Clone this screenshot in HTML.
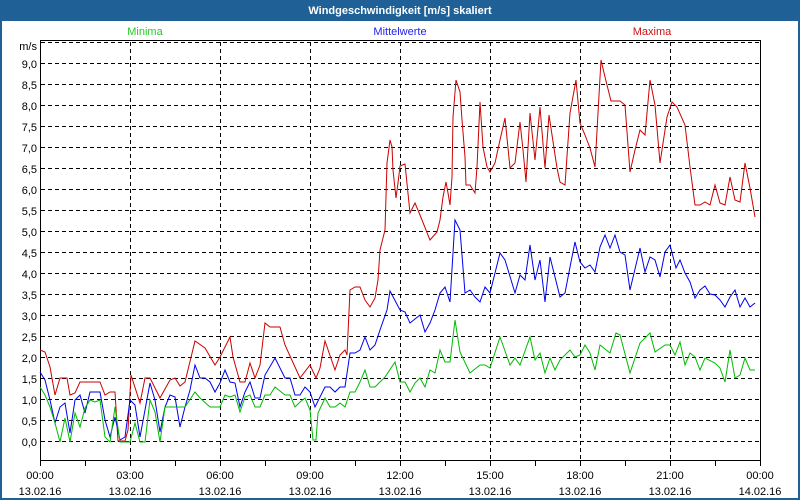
<!DOCTYPE html>
<html><head><meta charset="utf-8"><style>
body{margin:0;background:#fff;}
svg{display:block;font-family:"Liberation Sans","DejaVu Sans",sans-serif;}
</style></head><body>
<svg width="800" height="500" viewBox="0 0 800 500" xmlns="http://www.w3.org/2000/svg">
<rect x="0" y="0" width="800" height="500" fill="#1f6096"/>
<rect x="2" y="21" width="796" height="477" fill="#fff"/>
<text x="400" y="14" fill="#fff" font-size="11" font-weight="bold" text-anchor="middle">Windgeschwindigkeit [m/s] skaliert</text>
<text x="145" y="35" fill="#22cc22" font-size="11" text-anchor="middle">Minima</text>
<text x="400" y="35" fill="#2222ee" font-size="11" text-anchor="middle">Mittelwerte</text>
<text x="652" y="35" fill="#cc1111" font-size="11" text-anchor="middle">Maxima</text>
<g stroke="#000" stroke-width="1" stroke-dasharray="4,3" fill="none">
<path d="M41 42.5H760M41 63.5H760M41 84.5H760M41 105.5H760M41 126.5H760M41 147.5H760M41 168.5H760M41 189.5H760M41 210.5H760M41 231.5H760M41 252.5H760M41 273.5H760M41 294.5H760M41 315.5H760M41 336.5H760M41 357.5H760M41 378.5H760M41 399.5H760M41 420.5H760M41 441.5H760"/>
<path d="M130.5 42V461M220.5 42V461M310.5 42V461M400.5 42V461M490.5 42V461M580.5 42V461M670.5 42V461"/>
</g>
<rect x="40.5" y="40.5" width="720" height="420" fill="none" stroke="#000"/>
<path d="M40.5 461V466M85.5 461V466M130.5 461V466M175.5 461V466M220.5 461V466M265.5 461V466M310.5 461V466M355.5 461V466M400.5 461V466M445.5 461V466M490.5 461V466M535.5 461V466M580.5 461V466M625.5 461V466M670.5 461V466M715.5 461V466M760.5 461V466" stroke="#000"/>
<g font-size="11" fill="#000" text-anchor="end">
<text x="37" y="50">m/s</text>
<text x="37" y="68">9,0</text><text x="37" y="89">8,5</text><text x="37" y="110">8,0</text><text x="37" y="131">7,5</text><text x="37" y="152">7,0</text><text x="37" y="173">6,5</text><text x="37" y="194">6,0</text><text x="37" y="215">5,5</text><text x="37" y="236">5,0</text><text x="37" y="257">4,5</text><text x="37" y="278">4,0</text><text x="37" y="299">3,5</text><text x="37" y="320">3,0</text><text x="37" y="341">2,5</text><text x="37" y="362">2,0</text><text x="37" y="383">1,5</text><text x="37" y="404">1,0</text><text x="37" y="425">0,5</text><text x="37" y="446">0,0</text>
</g>
<g font-size="11" fill="#000" text-anchor="middle">
<text x="40" y="479">00:00</text><text x="40" y="495">13.02.16</text>
<text x="130" y="479">03:00</text><text x="130" y="495">13.02.16</text>
<text x="220" y="479">06:00</text><text x="220" y="495">13.02.16</text>
<text x="310" y="479">09:00</text><text x="310" y="495">13.02.16</text>
<text x="400" y="479">12:00</text><text x="400" y="495">13.02.16</text>
<text x="490" y="479">15:00</text><text x="490" y="495">13.02.16</text>
<text x="580" y="479">18:00</text><text x="580" y="495">13.02.16</text>
<text x="670" y="479">21:00</text><text x="670" y="495">13.02.16</text>
<text x="760" y="479">00:00</text><text x="760" y="495">14.02.16</text>
</g>
<g fill="none" stroke-width="1">
<polyline stroke="#cc0000" points="40,350 45,352 50,367 55,395 60,378 67,378 70,395 75,393 80,382 100,382 105,395 110,392 115,392 118,441 125,441 128,430 131,375 140,403 145,378 150,378 160,398 170,380 175,378 180,386 185,382 195,341 205,348 215,365 220,357 230,337 233,357 240,382 245,382 250,363 255,378 260,365 265,323 270,327 280,327 285,345 300,378 310,365 316,378 320,368 325,341 335,370 340,355 345,350 347,355 350,290 355,287 360,287 365,300 370,307 375,298 378,280 380,250 385,230 387,163 390,140 392,147 393,170 396,198 398,183 400,166 405,164 410,213 415,203 420,215 430,240 437,232 440,220 443,197 446,182 448,193 450,205 452,177 453,117 456,80 460,92 462,120 465,157 466,185 470,185 475,193 477,167 480,102 483,147 487,167 490,172 495,163 500,140 505,118 510,168 515,163 520,122 523,150 526,182 530,113 535,160 540,107 545,168 549,115 557,168 560,182 565,185 570,113 576,80 580,123 585,135 590,148 595,167 598,113 601,60 605,77 611,101 620,101 625,105 630,172 635,150 640,130 645,135 650,80 655,105 660,163 667,117 672,102 677,107 685,125 690,167 695,205 700,205 705,202 710,205 715,185 720,203 725,205 730,177 735,200 740,202 745,163 750,188 755,217"/>
<polyline stroke="#0000ee" points="40,372 45,380 50,400 55,423 60,407 65,403 70,433 75,400 80,395 85,413 90,392 100,392 105,420 110,437 115,417 120,440 125,437 130,400 135,405 140,437 145,410 150,383 155,400 160,432 165,407 170,395 175,397 180,427 185,407 190,390 195,365 200,378 205,378 210,382 215,392 220,383 225,370 230,382 235,383 240,407 245,392 250,382 255,398 260,398 265,375 275,358 285,378 290,378 295,395 300,395 305,387 310,392 315,407 325,387 330,387 335,392 340,387 345,387 350,353 355,353 360,350 365,337 370,350 375,345 380,330 387,310 390,291 400,310 405,312 410,323 420,315 425,332 430,323 435,310 440,293 445,287 450,302 455,220 460,230 465,293 470,290 475,297 480,302 485,287 490,293 500,253 505,260 515,293 520,275 525,280 530,245 535,280 540,260 545,302 550,257 555,277 560,297 565,293 570,267 575,242 580,262 585,268 590,265 595,272 600,247 605,235 610,248 615,235 620,252 625,255 630,290 640,248 645,272 650,257 655,260 660,277 665,252 670,245 676,268 680,260 685,273 690,282 695,298 700,290 705,286 710,294 715,295 720,300 725,307 730,297 735,290 740,307 745,298 750,307 755,303"/>
<polyline stroke="#00bb00" points="40,387 45,395 50,407 55,423 60,442 65,418 70,442 75,413 80,427 85,408 90,400 95,402 100,400 105,437 110,442 115,407 120,442 130,442 135,423 140,442 145,442 150,400 155,412 160,442 165,407 185,407 195,392 200,398 210,407 220,407 225,395 230,397 235,395 240,412 245,397 250,395 255,407 260,407 265,395 270,395 275,387 285,395 290,395 295,407 300,402 305,398 310,410 313,440 316,440 318,413 325,398 330,407 335,407 340,403 345,407 350,392 355,392 360,382 365,370 370,387 375,387 385,377 395,362 400,382 405,382 410,392 415,383 420,378 425,387 430,370 435,373 440,350 445,362 450,362 455,320 460,352 470,373 480,365 485,365 490,368 500,337 510,365 515,358 520,365 530,337 535,360 540,353 545,373 550,358 555,370 560,360 570,350 575,357 580,355 585,345 590,353 595,370 600,345 610,353 616,333 620,335 630,373 640,343 650,333 655,352 665,345 670,345 675,355 680,342 685,365 690,353 695,357 700,370 705,358 715,363 720,368 725,382 730,350 735,378 740,375 745,358 750,370 755,370"/>
</g>
</svg>
</body></html>
